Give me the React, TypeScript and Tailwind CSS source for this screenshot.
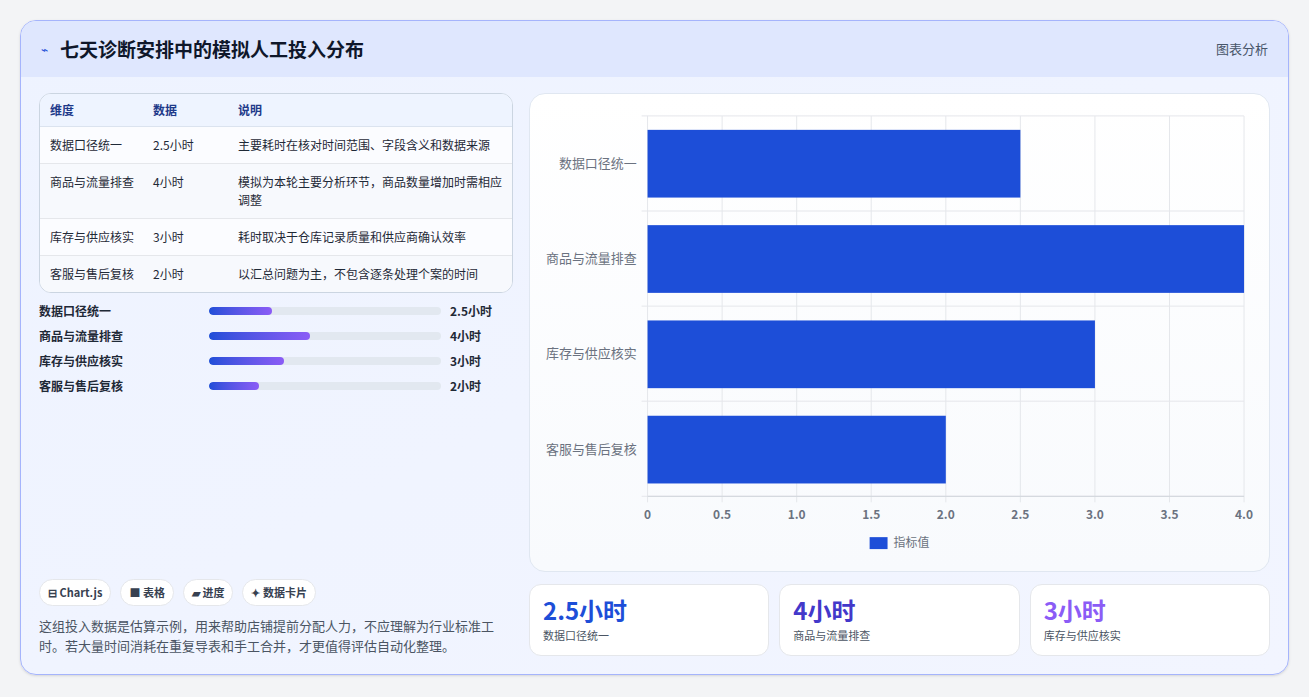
const rows = [
  { name: '数据口径统一', value: 2.5, note: '主要耗时在核对时间范围、字段含义和数据来源', pct: 27 },
  { name: '商品与流量排查', value: 4, note: '模拟为本轮主要分析环节，商品数量增加时需相应调整', pct: 43.5 },
  { name: '库存与供应核实', value: 3, note: '耗时取决于仓库记录质量和供应商确认效率', pct: 32.5 },
  { name: '客服与售后复核', value: 2, note: '以汇总问题为主，不包含逐条处理个案的时间', pct: 21.7 },
];

function Chart() {
  const x0 = 117, w = 599, y0 = 22, y1 = 404;
  const ticks = [0, 0.5, 1, 1.5, 2, 2.5, 3, 3.5, 4];
  return (
    <svg viewBox="0 0 740 479" className="w-full h-full" style={{ fontFamily: '"Noto Sans CJK SC", sans-serif' }}>
      {ticks.map(t => (
        <line key={t} x1={x0 + (t / 4) * w} x2={x0 + (t / 4) * w} y1={y0} y2={y1 + 6} stroke="#e5e7eb" />
      ))}
      {[0, 1, 2, 3, 4].map(i => (
        <line key={i} x1={x0 - 6} x2={x0 + w} y1={y0 + i * 95.5} y2={y0 + i * 95.5} stroke="#e5e7eb" />
      ))}
      <line x1={x0} x2={x0 + w} y1={y1} y2={y1} stroke="#d1d5db" />
      {rows.map((r, i) => (
        <g key={r.name}>
          <rect x={x0} y={36 + i * 95.7} width={(r.value / 4) * w} height={68} fill="#1d4ed8" />
          <text x={106} y={74 + i * 95.7} textAnchor="end" fontSize="13" fill="#6b7280">{r.name}</text>
        </g>
      ))}
      {ticks.map(t => (
        <text key={t} x={x0 + (t / 4) * w} y={427} textAnchor="middle" fontSize="12" fontWeight="600" fill="#6b7280">{t === 0 ? '0' : t.toFixed(1)}</text>
      ))}
      <rect x={340} y={445} width={18} height={12} fill="#1d4ed8" />
      <text x={364} y={455} fontSize="12" fill="#6b7280">指标值</text>
    </svg>
  );
}

export default function App() {
  return (
    <div className="w-[1309px] h-[697px] bg-[#f3f4f6] p-5 pt-5" style={{ fontFamily: '"Noto Sans CJK SC", "Noto Sans", sans-serif' }}>
      <div className="h-[655px] rounded-2xl border border-[#a5b4fc] bg-gradient-to-br from-[#eef3ff] to-[#f2f5ff] overflow-hidden flex flex-col shadow">
        <div className="h-[56px] shrink-0 bg-[#dfe7fe] flex items-center justify-between px-5">
          <div className="flex items-center gap-3">
            <span className="text-[#1d4ed8] text-xs">⌁</span>
            <span className="text-[19px] font-bold text-[#0f172a]">七天诊断安排中的模拟人工投入分布</span>
          </div>
          <span className="text-[13px] text-[#475569]">图表分析</span>
        </div>
        <div className="flex-1 flex gap-4 px-[18px] pt-4 pb-[18px]">
          <div className="w-[474px] flex flex-col justify-between">
            <div>
              <div className="rounded-xl border border-[#cbd5e1] bg-white overflow-hidden text-[12px] text-[#1f2937]">
                <div className="flex h-[33px] items-center bg-[#eef4ff] text-[#1e3a8a] font-semibold border-b border-[#dbe3ef]">
                  <div className="w-[113px] pl-[10px]">维度</div><div className="w-[85px]">数据</div><div className="flex-1">说明</div>
                </div>
                {rows.map((r, i) => (
                  <div key={r.name} className={`flex py-[9px] leading-[18px] ${i < 3 ? 'border-b border-[#e5e7eb]' : ''} ${i % 2 ? 'bg-[#f7f9fd]' : 'bg-[#fbfcff]'}`}>
                    <div className="w-[113px] pl-[10px]">{r.name}</div>
                    <div className="w-[85px]">{r.value}小时</div>
                    <div className="flex-1 pr-2">{r.note}</div>
                  </div>
                ))}
              </div>
              <div className="mt-[9px] flex flex-col gap-[7px] text-[12px] font-semibold text-[#1f2937]">
                {rows.map(r => (
                  <div key={r.name} className="flex items-center h-[18px]">
                    <div className="w-[170px]">{r.name}</div>
                    <div className="w-[232px] h-2 rounded-full bg-[#e2e8f0] overflow-hidden">
                      <div className="h-full rounded-full bg-gradient-to-r from-[#1d4ed8] to-[#8b5cf6]" style={{ width: r.pct + '%' }} />
                    </div>
                    <div className="ml-[9px]">{r.value}小时</div>
                  </div>
                ))}
              </div>
            </div>
            <div>
              <div className="flex gap-[9px] text-[11px] font-semibold text-[#374151]">
                <span className="px-2 h-[27px] flex items-center rounded-full bg-white border border-[#e5e7eb]">⊟ Chart.js</span>
                <span className="px-2 h-[27px] flex items-center rounded-full bg-white border border-[#e5e7eb]">■ 表格</span>
                <span className="px-2 h-[27px] flex items-center rounded-full bg-white border border-[#e5e7eb]">▰ 进度</span>
                <span className="px-2 h-[27px] flex items-center rounded-full bg-white border border-[#e5e7eb]">✦ 数据卡片</span>
              </div>
              <p className="mt-[10px] text-[13px] leading-[20px] text-[#4b5563]">这组投入数据是估算示例，用来帮助店铺提前分配人力，不应理解为行业标准工时。若大量时间消耗在重复导表和手工合并，才更值得评估自动化整理。</p>
            </div>
          </div>
          <div className="flex-1 flex flex-col gap-3">
            <div className="h-[479px] rounded-2xl border border-[#e0e7f1] bg-gradient-to-b from-white to-[#f8fafd]">
              <Chart />
            </div>
            <div className="flex gap-[10px]">
              {[['2.5小时', '数据口径统一', 'text-[#1d4ed8]'], ['4小时', '商品与流量排查', 'text-[#4338ca]'], ['3小时', '库存与供应核实', 'text-[#8b5cf6]']].map(([v, l, c]) => (
                <div key={l} className="flex-1 h-[72px] rounded-xl bg-white border border-[#e5e7eb] px-[13px] pt-[9px]">
                  <div className={`text-[24px] font-bold leading-[32px] ${c}`}>{v}</div>
                  <div className="text-[11px] text-[#4b5563] mt-[1px]">{l}</div>
                </div>
              ))}
            </div>
          </div>
        </div>
      </div>
    </div>
  );
}
